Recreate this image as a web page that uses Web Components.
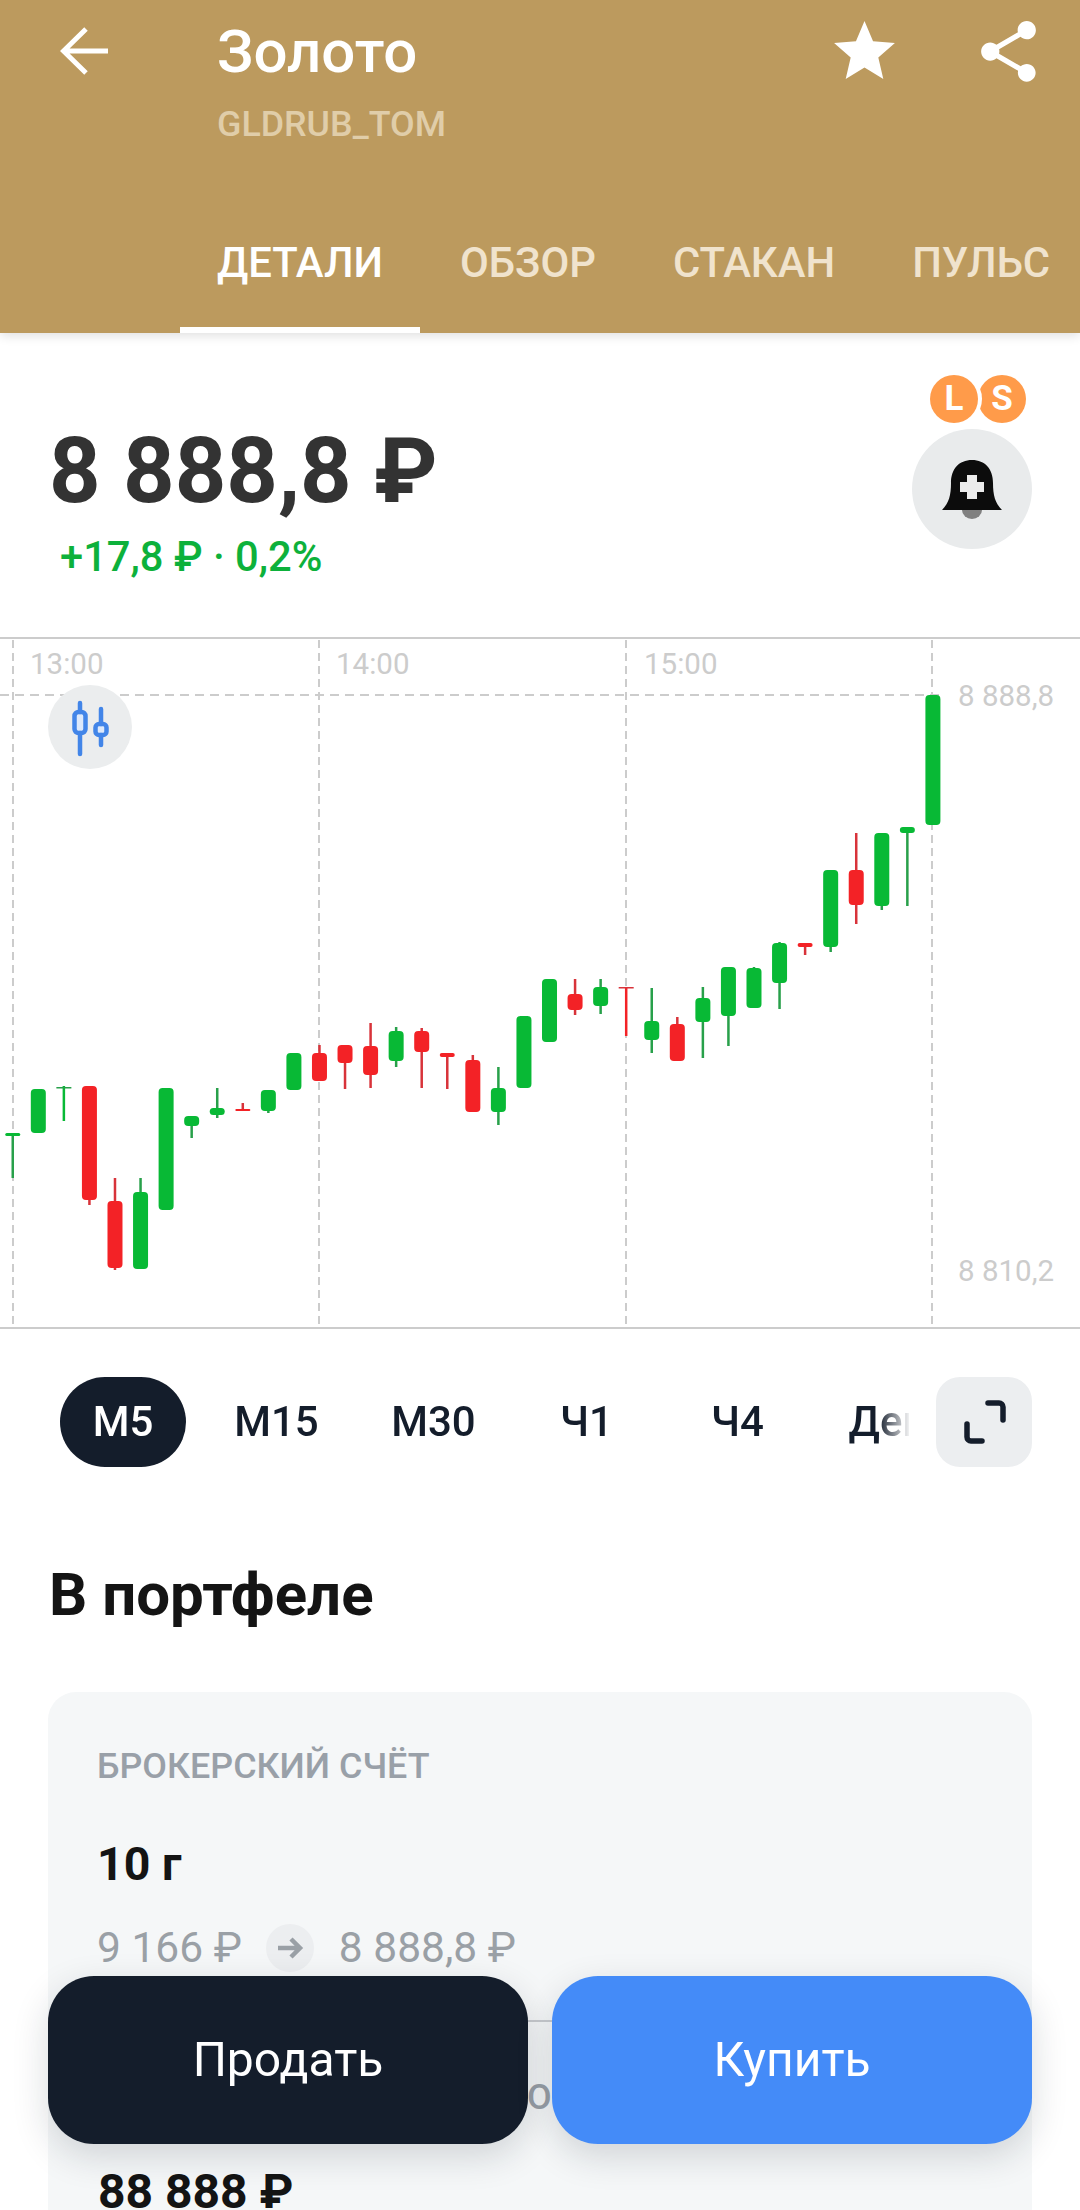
<!DOCTYPE html>
<html lang="ru">
<head>
<meta charset="utf-8">
<title>Золото</title>
<style>
  html, body { margin: 0; height: 2210px; overflow: hidden; background: #fff; font-family: Roboto, "Noto Sans", sans-serif; }
</style>
</head>
<body>
<asset-header name="Золото" ticker="GLDRUB_TOM"></asset-header>
<price-block price="8 888,8 ₽" change="+17,8 ₽ · 0,2%"></price-block>
<candle-chart></candle-chart>
<time-frames></time-frames>
<portfolio-section title="В портфеле">
  <position-card></position-card>
</portfolio-section>
<action-bar></action-bar>

<script>
class AssetHeader extends HTMLElement {
  constructor() {
    super();
    this.attachShadow({ mode: 'open' });
    const tabs = ['ДЕТАЛИ', 'ОБЗОР', 'СТАКАН', 'ПУЛЬС'];
    this.shadowRoot.innerHTML = `
    <style>
      :host { display: block; position: relative; z-index: 2; height: 333px; background: #bc9a5e; color: #fff; box-shadow: 0 3px 10px rgba(0,0,0,.12); overflow: visible; }
      .top { display: flex; height: 225px; align-items: flex-start; }
      .back { width: 217px; padding: 27px 0 0 60px; box-sizing: border-box; flex: none; }
      .back svg { display: block; }
      .titles { flex: 1; padding-top: 19px; }
      .name { font-size: 60px; line-height: 66px; font-weight: 500; }
      .ticker { font-size: 35.800px; line-height: 40px; margin-top: 19px; font-weight: 500; color: #e0cda9; }
      .acts { display: flex; gap: 71px; padding: 15px 35px 0 0; }
      .acts svg { display: block; width: 73px; height: 73px; fill: #fff; }
      nav { display: flex; height: 108px; padding-left: 180px; overflow: hidden; }
      nav span { box-sizing: border-box; height: 108px; padding: 0 37px; margin-right: 3px; font-size: 41.800px; line-height: 76px; font-weight: 500; color: #f0e3cd; white-space: nowrap; }
      nav span.on { color: #fff; border-bottom: 6px solid #fff; }
    </style>
    <div class="top">
      <div class="back">
        <svg width="48" height="48" viewBox="0 0 48 48" fill="none" stroke="#fff" stroke-width="5"><path d="M48 24H5M26 2L3.500 24L26 46"/></svg>
      </div>
      <div class="titles">
        <div class="name">${this.getAttribute('name')}</div>
        <div class="ticker">${this.getAttribute('ticker')}</div>
      </div>
      <div class="acts">
        <svg viewBox="0 0 24 24"><path d="M12 17.270L18.180 21l-1.640-7.030L22 9.240l-7.190-.610L12 2 9.190 8.630 2 9.240l5.460 4.730L5.820 21z"/></svg>
        <svg viewBox="0 0 24 24"><path d="M18 16.080c-.76 0-1.440.3-1.960.77L8.910 12.700c.05-.23.09-.46.09-.7s-.04-.47-.09-.7l7.050-4.110c.54.5 1.250.81 2.040.81 1.660 0 3-1.340 3-3s-1.340-3-3-3-3 1.340-3 3c0 .24.04.47.09.7L8.040 9.810C7.500 9.310 6.790 9 6 9c-1.660 0-3 1.340-3 3s1.340 3 3 3c.79 0 1.500-.31 2.040-.81l7.120 4.160c-.05.21-.08.43-.08.65 0 1.610 1.310 2.920 2.920 2.920 1.610 0 2.920-1.310 2.920-2.920s-1.310-2.920-2.920-2.920z"/></svg>
      </div>
    </div>
    <nav>${tabs.map((t, i) => `<span class="${i === 0 ? 'on' : ''}">${t}</span>`).join('')}</nav>
    `;
  }
}
customElements.define('asset-header', AssetHeader);

class PriceBlock extends HTMLElement {
  constructor() {
    super();
    this.attachShadow({ mode: 'open' });
    this.shadowRoot.innerHTML = `
    <style>
      :host { display: flex; justify-content: space-between; box-sizing: border-box; height: 304px; padding: 0 48px 0 49px; }
      .left { padding-top: 85px; }
      .price { font-size: 90px; line-height: 108px; font-weight: 700; color: #333; white-space: nowrap; }
      .change { font-size: 41.700px; line-height: 44px; font-weight: 500; color: #0db13b; margin: 9px 0 0 11px; white-space: nowrap; }
      .right { display: flex; flex-direction: column; align-items: center; padding-top: 42px; }
      .badges { display: flex; margin-left: 12px; }
      .badge { width: 48px; height: 48px; border-radius: 50%; background: #ff9b4a; color: #fff; font-size: 35px; line-height: 48px; font-weight: 700; text-align: center; }
      .badge.l { position: relative; z-index: 1; box-shadow: 0 0 0 4px #fff; }
      .bell { width: 120px; height: 120px; margin-top: 6px; border-radius: 50%; background: #e9ebec; }
      .bell svg { display: block; }
    </style>
    <div class="left">
      <div class="price">${this.getAttribute('price')}</div>
      <div class="change">${this.getAttribute('change')}</div>
    </div>
    <div class="right">
      <div class="badges"><div class="badge l">L</div><div class="badge">S</div></div>
      <div class="bell">
        <svg width="120" height="120" viewBox="0 0 120 120">
          <path d="M50 81h20a10 9 0 0 1-20 0z" fill="#808080"/>
          <path d="M30 81C37 74 39 66 39 54C39 40 47 31 60 31C73 31 81 40 81 54C81 66 83 74 90 81Z" fill="#0c0c0c"/>
          <path d="M55 46h10v7h7v10h-7v7h-10v-7h-7v-10h7z" fill="#ececec"/>
        </svg>
      </div>
    </div>
    `;
  }
}
customElements.define('price-block', PriceBlock);

// [bodyTop, bodyBottom, wickTop, wickBottom, 'g'|'r', thin]
const CANDLES = [
  [1132, 1135, 1132, 1177, 'g'],
  [1088, 1132, 1088, 1132, 'g'],
  [1086, 1087.500, 1085, 1120, 'g', 1],
  [1085, 1199, 1085, 1204, 'r'],
  [1200, 1267, 1177, 1269, 'r'],
  [1191, 1268, 1177, 1268, 'g'],
  [1087, 1209, 1087, 1209, 'g'],
  [1115, 1125, 1115, 1137, 'g'],
  [1107, 1114, 1087, 1117, 'g'],
  [1108, 1110, 1102, 1110, 'r'],
  [1089, 1110, 1089, 1112, 'g'],
  [1052, 1089, 1052, 1089, 'g'],
  [1052, 1080, 1044, 1080, 'r'],
  [1044, 1062, 1044, 1088, 'r'],
  [1045, 1074, 1022, 1087, 'r'],
  [1030, 1060, 1026, 1066, 'g'],
  [1030, 1051, 1027, 1087, 'r'],
  [1052, 1056, 1052, 1088, 'r'],
  [1059, 1111, 1054, 1111, 'r'],
  [1087, 1111, 1066, 1124, 'g'],
  [1015, 1087, 1015, 1087, 'g'],
  [978, 1041, 978, 1041, 'g'],
  [993, 1009, 978, 1014, 'r'],
  [986, 1005, 978, 1013, 'g'],
  [986, 987.500, 986, 1035, 'r', 1],
  [1020, 1039, 987, 1052, 'g'],
  [1023, 1060, 1016, 1060, 'r'],
  [997, 1021, 986, 1057, 'g'],
  [966, 1015, 966, 1045, 'g'],
  [967, 1007, 966, 1007, 'g'],
  [942, 982, 941, 1008, 'g'],
  [942, 946, 942, 954, 'r'],
  [869, 946, 869, 951, 'g'],
  [869, 904, 832, 923, 'r'],
  [832, 905, 832, 909, 'g'],
  [826, 832, 826, 905, 'g'],
  [694, 824, 694, 824, 'g']
];

class CandleChart extends HTMLElement {
  constructor() {
    super();
    this.attachShadow({ mode: 'open' });
    const colors = { g: ['#08b935', '#28a04a'], r: ['#f32226', '#d8333a'] };
    const grid = [13, 319, 626, 932].map(x =>
      `<line x1="${x}" y1="639" x2="${x}" y2="1327" stroke="#ccc" stroke-width="2" stroke-dasharray="8 5"/>`).join('');
    const bars = CANDLES.map((c, i) => {
      const x = 12.75 + 25.56 * i;
      const [fill, wick] = colors[c[4]];
      return `<rect x="${x - 1.25}" y="${c[2]}" width="2.500" height="${c[3] - c[2]}" fill="${c[5] ? fill : wick}"/>` +
        `<rect x="${x - 7.5}" y="${c[0]}" width="15" height="${c[1] - c[0]}" rx="${c[5] ? 0 : Math.min(4, (c[1] - c[0]) / 2)}" fill="${c[5] ? wick : fill}"/>`;
    }).join('');
    this.shadowRoot.innerHTML = `
    <style>
      :host { display: block; position: relative; box-sizing: border-box; height: 692px; border-top: 2px solid #ccc; border-bottom: 2px solid #ccc; font-size: 29.500px; line-height: 32px; color: #ccc; overflow: hidden; }
      svg { display: block; position: absolute; left: 0; top: 0; }
      .lab { position: absolute; white-space: nowrap; }
      .tools { position: absolute; left: 48px; top: 46px; width: 84px; height: 84px; border-radius: 50%; background: #ebedee; }
      .tools svg { position: static; }
    </style>
    <svg width="1080" height="690" viewBox="0 638 1080 690">
      ${grid}
      <line x1="0" y1="694" x2="942" y2="694" stroke="#ccc" stroke-width="2" stroke-dasharray="9 6"/>
      ${bars}
    </svg>
    <span class="lab" style="left:30px;top:9px">13:00</span>
    <span class="lab" style="left:336px;top:9px">14:00</span>
    <span class="lab" style="left:644px;top:9px">15:00</span>
    <span class="lab" style="left:958px;top:41px">8 888,8</span>
    <span class="lab" style="left:958px;top:616px">8 810,2</span>
    <div class="tools">
      <svg width="84" height="84" viewBox="0 0 84 84" fill="none" stroke="#4285e8" stroke-width="4.500" stroke-linecap="round">
        <rect x="26.500" y="27" width="11" height="21" rx="4" fill="#dde9fb"/>
        <path d="M32 18v9M32 48v21"/>
        <rect x="47.500" y="39" width="11" height="11" rx="3.500" fill="#dde9fb"/>
        <path d="M53 24v15M53 50v10"/>
      </svg>
    </div>
    `;
  }
}
customElements.define('candle-chart', CandleChart);

class TimeFrames extends HTMLElement {
  constructor() {
    super();
    this.attachShadow({ mode: 'open' });
    const items = [['М5', 126], ['М15', 125], ['М30', 133], ['Ч1', 117], ['Ч4', 129], ['День', 138]];
    this.shadowRoot.innerHTML = `
    <style>
      :host { display: flex; justify-content: space-between; margin-top: 48px; padding: 0 48px 0 60px; height: 90px; }
      .list { display: flex; gap: 28px; width: 849px; overflow: hidden; -webkit-mask-image: linear-gradient(to right, #000 818px, transparent 851px); mask-image: linear-gradient(to right, #000 818px, transparent 851px); }
      .item { flex: none; height: 90px; border-radius: 45px; font-size: 42px; line-height: 90px; font-weight: 500; color: #141d2b; text-align: center; }
      .item.on { background: #141d2b; color: #fff; }
      .expand { width: 96px; height: 90px; border-radius: 24px; background: #eceef0; }
      .expand svg { display: block; }
    </style>
    <div class="list">${items.map((t, i) => `<div class="item ${i === 0 ? 'on' : ''}" style="width:${t[1]}px">${t[0]}</div>`).join('')}</div>
    <div class="expand">
      <svg width="96" height="90" viewBox="0 0 96 90" fill="none" stroke="#141d2b" stroke-width="5.500" stroke-linecap="round" stroke-linejoin="round">
        <path d="M52 26h11a4 4 0 0 1 4 4v13"/>
        <path d="M31 47v13a4 4 0 0 0 4 4h11"/>
      </svg>
    </div>
    `;
  }
}
customElements.define('time-frames', TimeFrames);

class PortfolioSection extends HTMLElement {
  constructor() {
    super();
    this.attachShadow({ mode: 'open' });
    this.shadowRoot.innerHTML = `
    <style>
      :host { display: block; padding: 0 48px; }
      h2 { margin: 93px 0 0 1px; font-size: 60px; line-height: 70px; font-weight: 700; color: #141414; }
      .body { margin-top: 62px; }
    </style>
    <h2>${this.getAttribute('title')}</h2>
    <div class="body"><slot></slot></div>
    `;
  }
}
customElements.define('portfolio-section', PortfolioSection);

class PositionCard extends HTMLElement {
  constructor() {
    super();
    this.attachShadow({ mode: 'open' });
    this.shadowRoot.innerHTML = `
    <style>
      :host { display: block; box-sizing: border-box; height: 700px; background: #f5f7f8; border-radius: 28px; padding: 0 0 0 49px; }
      .label { padding-top: 54px; font-size: 35.800px; line-height: 40px; font-weight: 500; color: #99a0a8; white-space: nowrap; }
      .qty { margin-top: 51px; font-size: 46.500px; line-height: 54px; font-weight: 700; color: #141414; }
      .line { display: flex; align-items: center; gap: 24px; margin-top: 33px; font-size: 42.500px; line-height: 48px; color: #9aa0a6; white-space: nowrap; }
      .line span:last-child { margin-left: 1px; }
      .arr { width: 48px; height: 48px; border-radius: 50%; background: #eceef0; }
      .arr svg { display: block; }
      hr { margin: 48px 0 0 0; border: 0; border-top: 2px solid #c8cbcf; }
      .next { padding-top: 55px; }
      .sum { margin-top: 48px; margin-left: 1px; font-size: 48px; }
    </style>
    <div class="label">БРОКЕРСКИЙ СЧЁТ</div>
    <div class="qty">10 г</div>
    <div class="line">
      <span>9 166 ₽</span>
      <span class="arr"><svg width="48" height="48" viewBox="0 0 48 48" fill="none" stroke="#9aa0a6" stroke-width="4.500"><path d="M12 24h21M25 15l9 9l-9 9"/></svg></span>
      <span>8 888,8 ₽</span>
    </div>
    <hr>
    <div class="label next">ТЕКУЩАЯ СТОИМОСТЬ ПОРТФЕЛЯ</div>
    <div class="qty sum">88 888 ₽</div>
    `;
  }
}
customElements.define('position-card', PositionCard);

class ActionBar extends HTMLElement {
  constructor() {
    super();
    this.attachShadow({ mode: 'open' });
    this.shadowRoot.innerHTML = `
    <style>
      :host { display: flex; gap: 24px; position: fixed; left: 48px; right: 48px; top: 1976px; z-index: 3; }
      .btn { flex: 1; height: 168px; border-radius: 46px; font-size: 48px; line-height: 168px; text-align: center; color: #fff; box-shadow: 0 12px 36px rgba(20,29,43,.16); }
      .sell { background: #141d2b; }
      .buy { background: #448bf8; }
    </style>
    <div class="btn sell">Продать</div>
    <div class="btn buy">Купить</div>
    `;
  }
}
customElements.define('action-bar', ActionBar);
</script>
</body>
</html>
